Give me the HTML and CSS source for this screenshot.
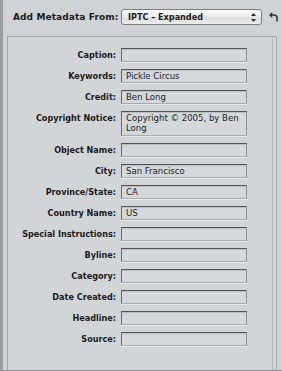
FILE: index.html
```html
<!DOCTYPE html>
<html lang="en">
<head>
	<meta charset="UTF-8">
	<title>IPTC Metadata</title>
	<link rel="stylesheet" href="styles.css">
</head>
<body>
	<div class="window">
		<div class="source-bar">
			<span class="source-label">Add Metadata From:</span>
			<div class="popup">
				<span class="popup-text">IPTC – Expanded</span>
				<svg class="popup-arrows" width="5" height="9" viewBox="0 0 5 9">
					<path d="M2.5 0 L5 3 H0 Z M2.5 9 L5 6 H0 Z" fill="#2a2a2a"/>
				</svg>
			</div>
			<svg class="revert" width="9" height="10" viewBox="0 0 9 10">
				<path d="M0 3 L3.2 0 V6 Z" fill="#333"/>
				<path d="M3 3 H5 Q8 3 8 6 V9.5" fill="none" stroke="#333" stroke-width="1.6"/>
			</svg>
		</div>

		<div class="panel">
			<div class="panel-inner">
				<div class="field-row"><span class="field-label">Caption:</span><div class="field"></div></div>
				<div class="field-row"><span class="field-label">Keywords:</span><div class="field">Pickle Circus</div></div>
				<div class="field-row"><span class="field-label">Credit:</span><div class="field">Ben Long</div></div>
				<div class="field-row"><span class="field-label">Copyright Notice:</span><div class="field field-tall">Copyright © 2005, by Ben Long</div></div>
				<div class="field-row"><span class="field-label">Object Name:</span><div class="field"></div></div>
				<div class="field-row"><span class="field-label">City:</span><div class="field">San Francisco</div></div>
				<div class="field-row"><span class="field-label">Province/State:</span><div class="field">CA</div></div>
				<div class="field-row"><span class="field-label">Country Name:</span><div class="field">US</div></div>
				<div class="field-row"><span class="field-label">Special Instructions:</span><div class="field"></div></div>
				<div class="field-row"><span class="field-label">Byline:</span><div class="field"></div></div>
				<div class="field-row"><span class="field-label">Category:</span><div class="field"></div></div>
				<div class="field-row"><span class="field-label">Date Created:</span><div class="field"></div></div>
				<div class="field-row"><span class="field-label">Headline:</span><div class="field"></div></div>
				<div class="field-row"><span class="field-label">Source:</span><div class="field"></div></div>
			</div>
		</div>
	</div>
</body>
</html>
```

FILE: styles.css
```css
body {
    margin: 0;
    font-family: "DejaVu Sans Condensed", "DejaVu Sans", sans-serif;
    color: #1a1a1a;
}

.window {
    box-sizing: border-box;
    width: 282px;
    height: 371px;
    background: #d0d3d6;
    border-left: 3px solid #9b9ea1;
    border-bottom: 1px solid #8b8e91;
    display: flex;
    flex-direction: column;
    overflow: hidden;
}

.source-bar {
    display: flex;
    align-items: center;
    height: 16px;
    margin-top: 9px;
    padding-left: 10px;
}

.source-label {
    flex: none;
    width: 108px;
    white-space: nowrap;
    font-family: "DejaVu Sans", sans-serif;
    font-weight: bold;
    font-size: 9px;
    letter-spacing: 0.1px;
}

.popup {
    box-sizing: border-box;
    width: 141px;
    height: 16px;
    border: 1px solid #7b7e81;
    border-radius: 3px;
    background: linear-gradient(#fbfbfb, #ebebeb 50%, #dedede 55%, #ededed);
    display: flex;
    align-items: center;
    justify-content: space-between;
    padding: 0 5px 0 6px;
}

.popup-text {
    font-weight: bold;
    font-size: 9px;
}

.revert {
    margin-left: 7px;
}

.panel {
    box-sizing: border-box;
    flex: 1;
    width: 270px;
    margin: 11px 0 0 4px;
    border: 1px solid #a4a7aa;
    border-bottom: none;
    background: #d2d5d8;
}

.panel-inner {
    box-sizing: border-box;
    width: 265px;
    height: 100%;
    border-right: 1px solid #b1b4b7;
    padding-top: 11px;
    display: flex;
    flex-direction: column;
    gap: 7px;
}

.field-row {
    display: flex;
    align-items: flex-start;
}

.field-label {
    flex: none;
    width: 108px;
    margin-right: 5px;
    padding-top: 2px;
    text-align: right;
    font-weight: bold;
    font-size: 9px;
    line-height: 10px;
}

.field {
    box-sizing: border-box;
    width: 126px;
    height: 14px;
    padding: 1px 2px 1px 4px;
    border: 1px solid;
    border-color: #505356 #8d9093 #a8abae #686b6e;
    box-shadow: 0 1px 0 #e9ebec, inset 0 1px 0 #bcbfc2;
    background: #d5d8db;
    font-size: 9.5px;
    line-height: 10px;
    color: #222;
}

.field-tall {
    height: 25px;
}
```
